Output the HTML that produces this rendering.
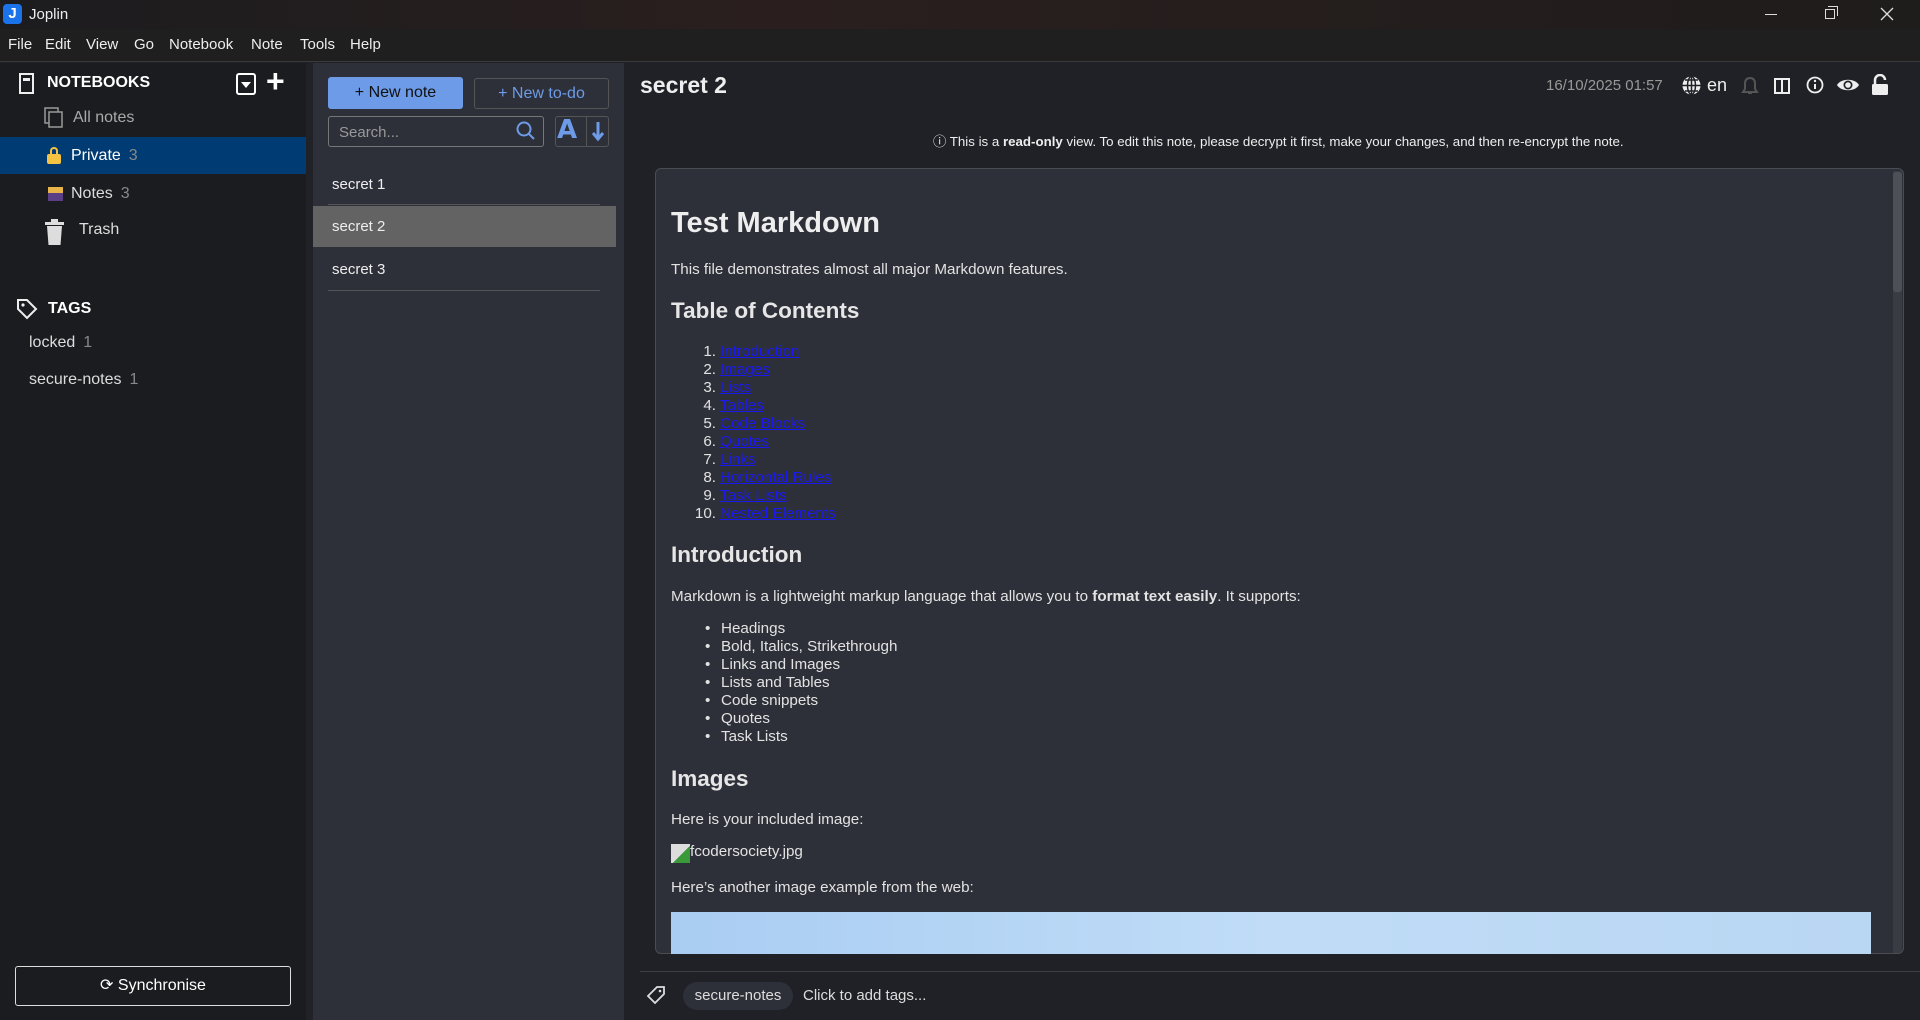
<!DOCTYPE html>
<html><head><meta charset="utf-8"><style>
*{margin:0;padding:0;box-sizing:border-box}
body{width:1920px;height:1020px;overflow:hidden;background:#1f2126;font-family:"Liberation Sans",sans-serif;color:#dcdcdc;position:relative}
.a{position:absolute;white-space:nowrap}
#title{left:0;top:0;width:1920px;height:29px;background:linear-gradient(90deg,#1c1c1e,#2a1f1e 40%,#1f1c1c)}
#menu{left:0;top:29px;width:1920px;height:33px;background:#1f1f20;border-bottom:1px solid #3a3a3a}
.m{font-size:15px;color:#eee;top:36px}
#side{left:0;top:63px;width:306px;height:957px;background:#1b1c20}
#list{left:313px;top:63px;width:311px;height:957px;background:#2d3039}
#gap{left:306px;top:63px;width:7px;height:957px;background:#202227}
.si{font-size:16px;color:#ddd}
.cnt{color:#888;margin-left:8px}
.btn{border-radius:3px;font-size:16px;text-align:center;line-height:32px}
#box{left:655px;top:168px;width:1249px;height:786px;background:#2e3039;border:1px solid #4a4c52;border-radius:6px;overflow:hidden}
.p{font-size:15.2px;color:#e2e2e2}
.h2{font-size:22.5px;font-weight:bold;color:#e6e6e6}
.li{font-size:15.2px;line-height:18px;color:#e2e2e2}
.li a{color:#1a1aee;text-decoration:underline}
</style></head><body>
<div id="title" class="a"></div>
<div class="a" style="left:3px;top:4px;width:19px;height:20px;background:#1a73e8;border-radius:4px;color:#fff;font-weight:bold;font-size:15px;text-align:center;line-height:20px">J</div>
<div class="a" style="left:29px;top:6px;font-size:15px;color:#eee">Joplin</div>
<div class="a" style="left:1765px;top:14px;width:12px;height:1px;background:#ddd"></div>
<div class="a" style="left:1825px;top:9px;width:10px;height:10px;border:1px solid #ddd"></div>
<div class="a" style="left:1828px;top:6px;width:10px;height:10px;border-top:1px solid #ddd;border-right:1px solid #ddd"></div>
<svg class="a" style="left:1880px;top:7px" width="14" height="14"><path d="M1 1l12 12M13 1L1 13" stroke="#ddd" stroke-width="1.3"/></svg>
<div id="menu" class="a"></div>
<div class="a m" style="left:8px">File</div><div class="a m" style="left:45px">Edit</div><div class="a m" style="left:86px">View</div><div class="a m" style="left:134px">Go</div><div class="a m" style="left:169px">Notebook</div><div class="a m" style="left:251px">Note</div><div class="a m" style="left:300px">Tools</div><div class="a m" style="left:350px">Help</div>

<div id="side" class="a"></div><div id="gap" class="a"></div><div id="list" class="a"></div>
<!-- sidebar -->
<svg class="a" style="left:18px;top:73px" width="18" height="22"><rect x="2" y="1" width="13" height="19" fill="none" stroke="#eee" stroke-width="2"/><rect x="5" y="5" width="7" height="3" fill="#eee"/></svg>
<div class="a" style="left:47px;top:74px;font-size:16px;font-weight:bold;color:#fff">NOTEBOOKS</div>
<svg class="a" style="left:236px;top:73px" width="20" height="22"><rect x="1" y="1" width="18" height="20" rx="2" fill="none" stroke="#fff" stroke-width="2"/><path d="M5 9h10l-5 6z" fill="#fff"/></svg>
<div class="a" style="left:266px;top:63px;font-size:32px;font-weight:bold;color:#fff">+</div>
<svg class="a" style="left:44px;top:107px" width="20" height="22"><rect x="1" y="1" width="13" height="15" fill="none" stroke="#999" stroke-width="1.5"/><rect x="5" y="5" width="13" height="15" fill="#1b1c20" stroke="#999" stroke-width="1.5"/></svg>
<div class="a si" style="left:73px;top:109px;color:#aaa">All notes</div>
<div class="a" style="left:0;top:137px;width:306px;height:37px;background:#003b73"></div>
<div class="a" style="left:47px;top:147px;width:14px;height:18px"><div style="position:absolute;left:3px;top:0;width:8px;height:8px;border:2px solid #f5c342;border-bottom:none;border-radius:4px 4px 0 0"></div><div style="position:absolute;left:0;top:7px;width:14px;height:10px;background:#f5c342;border-radius:2px"></div></div>
<div class="a si" style="left:71px;top:147px;color:#fff">Private<span class="cnt">3</span></div>
<div class="a" style="left:48px;top:187px;width:15px;height:14px;background:#5a3f86"><div style="height:6px;background:#e9b54a"></div></div>
<div class="a si" style="left:71px;top:185px">Notes<span class="cnt">3</span></div>
<svg class="a" style="left:44px;top:219px" width="22" height="28"><rect x="1" y="3" width="19" height="3" fill="#ddd"/><rect x="7" y="0" width="7" height="3" fill="#ddd"/><path d="M3 7h15l-1.5 19h-12z" fill="#ddd"/></svg>
<div class="a si" style="left:79px;top:221px">Trash</div>
<svg class="a" style="left:16px;top:298px" width="22" height="22"><path d="M2 2h9l9 9-9 9-9-9z" fill="none" stroke="#eee" stroke-width="2"/><circle cx="7" cy="7" r="1.6" fill="#eee"/></svg>
<div class="a" style="left:48px;top:300px;font-size:16px;font-weight:bold;color:#fff">TAGS</div>
<div class="a si" style="left:29px;top:334px">locked<span class="cnt">1</span></div>
<div class="a si" style="left:29px;top:371px">secure-notes<span class="cnt">1</span></div>
<div class="a btn" style="left:15px;top:966px;width:276px;height:40px;border:1px solid #ddd;line-height:38px;color:#fff">⟳ Synchronise</div>
<!-- note list -->
<div class="a btn" style="left:328px;top:77px;width:135px;height:32px;background:#6d9be8;color:#111">+ New note</div>
<div class="a btn" style="left:474px;top:78px;width:135px;height:31px;border:1px solid #555;color:#6d9be8;line-height:29px">+ New to-do</div>
<div class="a" style="left:328px;top:116px;width:216px;height:31px;border:1px solid #777;border-radius:3px;font-size:15px;color:#999;padding:7px 10px">Search...</div>
<svg class="a" style="left:515px;top:120px" width="22" height="22"><circle cx="9" cy="9" r="6.5" fill="none" stroke="#6d9be8" stroke-width="2"/><path d="M14 14l5 5" stroke="#6d9be8" stroke-width="2"/></svg>
<div class="a" style="left:555px;top:116px;width:54px;height:31px;border:1px solid #555;border-radius:3px"></div>
<div class="a" style="left:557px;top:115px;font-size:26px;font-weight:bold;color:#6d9be8;font-family:'DejaVu Sans',sans-serif">A</div>
<div class="a" style="left:586px;top:117px;width:1px;height:29px;background:#555"></div>
<svg class="a" style="left:590px;top:120px" width="16" height="24"><path d="M8 2v16M3 13l5 6 5-6" fill="none" stroke="#6d9be8" stroke-width="3"/></svg>
<div class="a" style="left:332px;top:176px;font-size:15px;color:#eee">secret 1</div>
<div class="a" style="left:328px;top:204px;width:272px;height:1px;background:#555"></div>
<div class="a" style="left:313px;top:206px;width:303px;height:41px;background:#636363"></div>
<div class="a" style="left:332px;top:218px;font-size:15px;color:#eee">secret 2</div>
<div class="a" style="left:332px;top:261px;font-size:15px;color:#eee">secret 3</div>
<div class="a" style="left:328px;top:290px;width:272px;height:1px;background:#555"></div>
<!-- editor header -->
<div class="a" style="left:640px;top:72px;font-size:23px;font-weight:bold;color:#eee">secret 2</div>
<div class="a" style="left:1546px;top:77px;font-size:15px;color:#999">16/10/2025 01:57</div>
<svg class="a" style="left:1681px;top:75px" width="21" height="21"><circle cx="10.5" cy="10.5" r="9" fill="#eee"/><path d="M1.5 10.5h18M10.5 1.5v18M4 5h13M4 16h13" stroke="#1f2126" stroke-width="1.5"/><ellipse cx="10.5" cy="10.5" rx="4" ry="9" fill="none" stroke="#1f2126" stroke-width="1.5"/></svg>
<div class="a" style="left:1707px;top:75px;font-size:18px;color:#eee">en</div>
<svg class="a" style="left:1741px;top:76px" width="18" height="20"><path d="M9 2c-4 0-5 3-5 6v5l-2 3h14l-2-3v-5c0-3-1-6-5-6zM7 17h4" fill="none" stroke="#555" stroke-width="2"/></svg>
<svg class="a" style="left:1774px;top:78px" width="16" height="16"><rect x="1" y="1" width="14" height="14" fill="none" stroke="#eee" stroke-width="2"/><path d="M8 1v14" stroke="#eee" stroke-width="2"/></svg>
<svg class="a" style="left:1806px;top:76px" width="18" height="18"><circle cx="9" cy="9" r="7.5" fill="none" stroke="#eee" stroke-width="1.8"/><path d="M9 8v5" stroke="#eee" stroke-width="2"/><circle cx="9" cy="5" r="1.2" fill="#eee"/></svg>
<svg class="a" style="left:1836px;top:77px" width="24" height="16"><path d="M1 8c4-7 18-7 22 0c-4 7-18 7-22 0z" fill="#eee"/><circle cx="12" cy="8" r="4.5" fill="#1f2126"/><circle cx="12" cy="8" r="2.8" fill="#eee"/></svg>
<svg class="a" style="left:1870px;top:74px" width="20" height="22"><path d="M5 10V6a5 5 0 0 1 10 0" fill="none" stroke="#eee" stroke-width="2.5"/><rect x="2" y="10" width="16" height="11" rx="1.5" fill="#eee"/></svg>
<div class="a" style="left:933px;top:131px;font-size:13.3px;color:#eee">ⓘ This is a <b>read-only</b> view. To edit this note, please decrypt it first, make your changes, and then re-encrypt the note.</div>
<!-- content -->
<div id="box" class="a">
<div class="a" style="right:1px;top:2px;width:9px;height:782px;background:#3a3c44"></div>
<div class="a" style="right:1px;top:3px;width:9px;height:120px;background:#4e5058;border-radius:3px"></div>
</div>
<div class="a" style="left:671px;top:207px;font-size:29px;font-weight:bold;color:#eee">Test Markdown</div>
<div class="a p" style="left:671px;top:261px">This file demonstrates almost all major Markdown features.</div>
<div class="a h2" style="left:671px;top:298px">Table of Contents</div>
<div class="a li" style="left:668px;top:343px">
<div style="display:grid;grid-template-columns:48px auto;column-gap:4px">
<span style="text-align:right">1.</span><a>Introduction</a>
<span style="text-align:right">2.</span><a>Images</a>
<span style="text-align:right">3.</span><a>Lists</a>
<span style="text-align:right">4.</span><a>Tables</a>
<span style="text-align:right">5.</span><a>Code Blocks</a>
<span style="text-align:right">6.</span><a>Quotes</a>
<span style="text-align:right">7.</span><a>Links</a>
<span style="text-align:right">8.</span><a>Horizontal Rules</a>
<span style="text-align:right">9.</span><a>Task Lists</a>
<span style="text-align:right">10.</span><a>Nested Elements</a>
</div></div>
<div class="a h2" style="left:671px;top:542px">Introduction</div>
<div class="a p" style="left:671px;top:588px">Markdown is a lightweight markup language that allows you to <b>format text easily</b>. It supports:</div>
<div class="a li" style="left:705px;top:620px">
<div style="display:grid;grid-template-columns:16px auto">
<span>•</span><span>Headings</span><span>•</span><span>Bold, Italics, Strikethrough</span><span>•</span><span>Links and Images</span><span>•</span><span>Lists and Tables</span><span>•</span><span>Code snippets</span><span>•</span><span>Quotes</span><span>•</span><span>Task Lists</span></div></div>
<div class="a h2" style="left:671px;top:766px">Images</div>
<div class="a p" style="left:671px;top:811px">Here is your included image:</div>
<div class="a" style="left:671px;top:844px;width:19px;height:19px;background:linear-gradient(135deg,#ddd 55%,#3a9a3a 55%)"></div>
<div class="a p" style="left:690px;top:843px">fcodersociety.jpg</div>
<div class="a p" style="left:671px;top:879px">Here’s another image example from the web:</div>
<div class="a" style="left:671px;top:912px;width:1200px;height:42px;background:linear-gradient(90deg,#a9cdf2,#c0dcf7 50%,#b9d6f2)"></div>
<!-- footer -->
<div class="a" style="left:640px;top:971px;width:1280px;height:1px;background:#3d3f45"></div>
<svg class="a" style="left:646px;top:985px" width="20" height="20"><path d="M11 2h7v7l-9 9-7-7z" fill="none" stroke="#ddd" stroke-width="1.8"/><circle cx="14" cy="6" r="1.3" fill="#ddd"/></svg>
<div class="a" style="left:683px;top:982px;width:110px;height:28px;background:#2e3039;border-radius:14px;font-size:15px;text-align:center;line-height:28px;color:#ddd">secure-notes</div>
<div class="a" style="left:803px;top:987px;font-size:15px;color:#ddd">Click to add tags...</div>
</body></html>
